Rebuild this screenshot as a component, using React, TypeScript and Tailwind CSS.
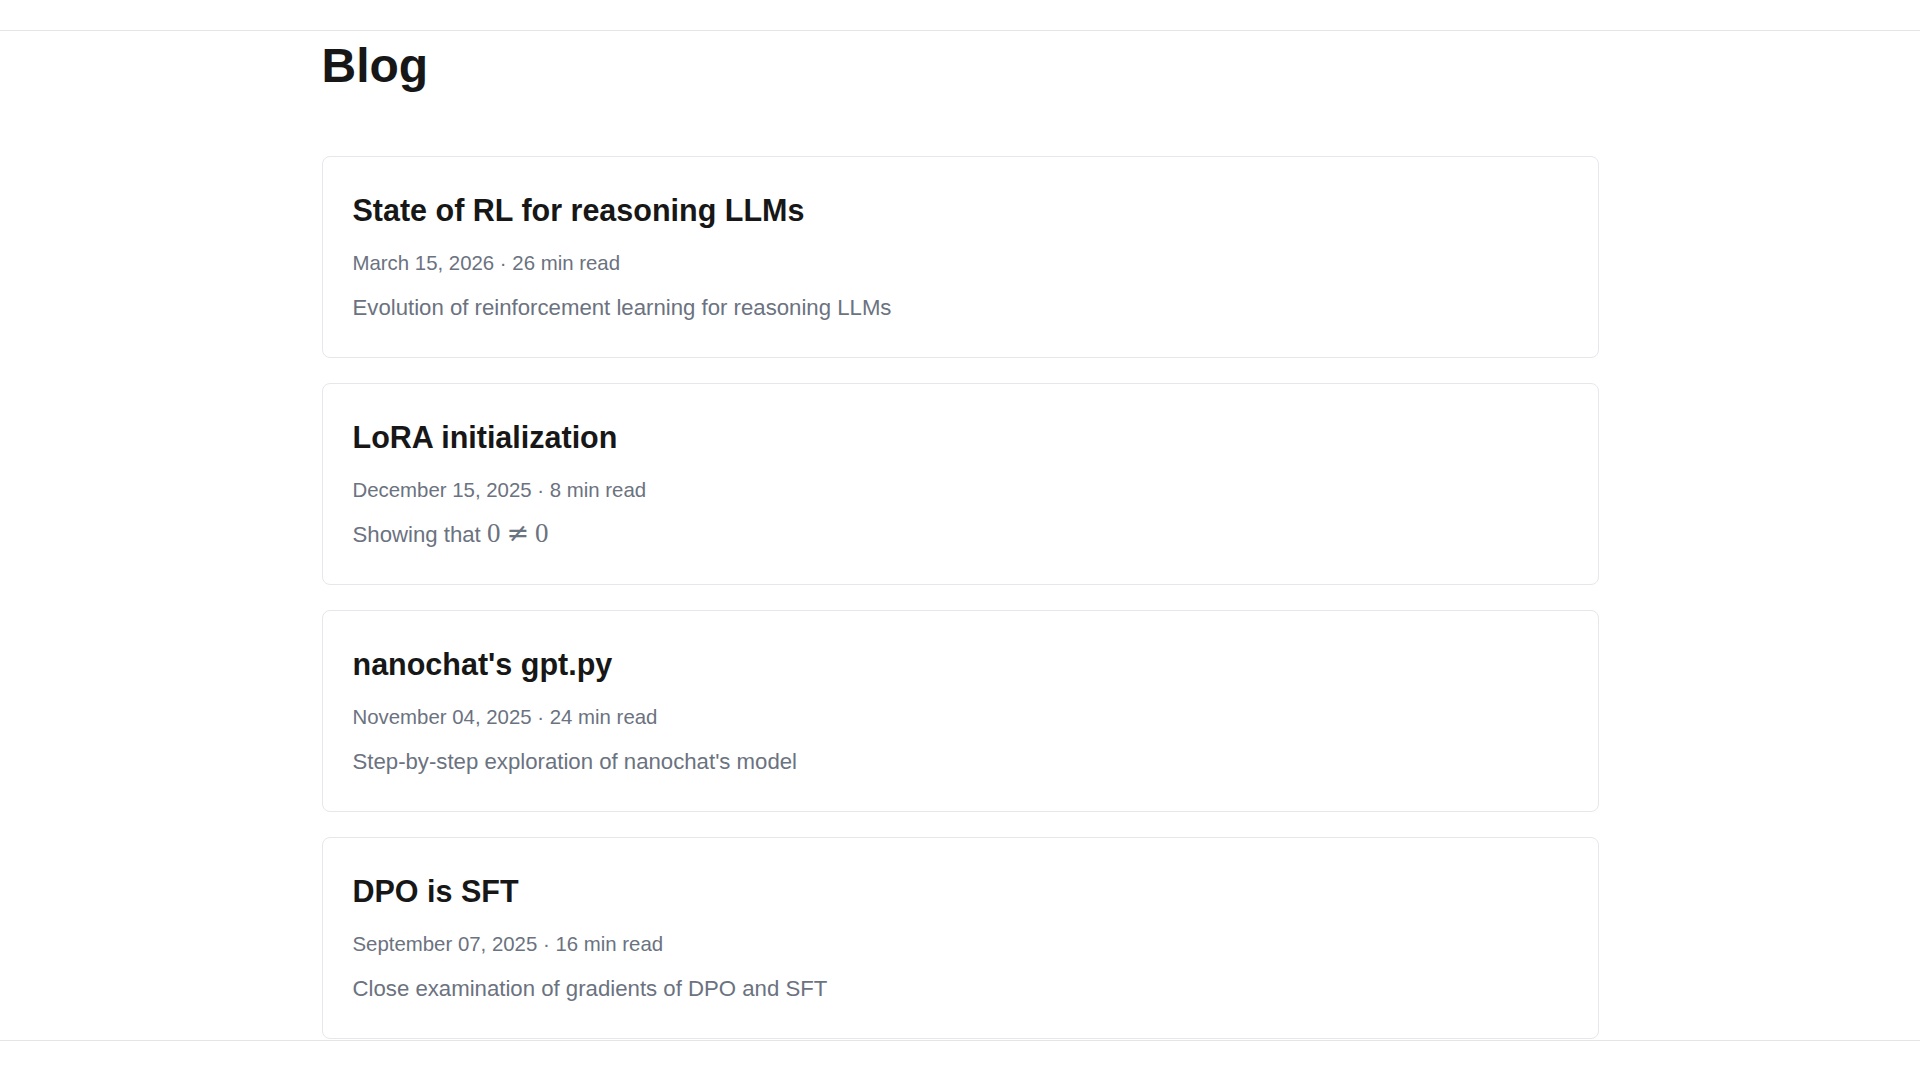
import React from 'react';

type Post = {
  title: string;
  date: string;
  readTime: string;
  summary: React.ReactNode;
};

const posts: Post[] = [
  {
    title: 'State of RL for reasoning LLMs',
    date: 'March 15, 2026',
    readTime: '26 min read',
    summary: 'Evolution of reinforcement learning for reasoning LLMs',
  },
  {
    title: 'LoRA initialization',
    date: 'December 15, 2025',
    readTime: '8 min read',
    summary: (
      <>
        Showing that{' '}
        <span className="font-['Liberation_Serif',serif] text-[27px] leading-none">0</span>
        <span className="font-['DejaVu_Serif',serif] text-[27px] leading-none mx-[6px]">≠</span>
        <span className="font-['Liberation_Serif',serif] text-[27px] leading-none">0</span>
      </>
    ),
  },
  {
    title: "nanochat's gpt.py",
    date: 'November 04, 2025',
    readTime: '24 min read',
    summary: "Step-by-step exploration of nanochat's model",
  },
  {
    title: 'DPO is SFT',
    date: 'September 07, 2025',
    readTime: '16 min read',
    summary: 'Close examination of gradients of DPO and SFT',
  },
];

function PostCard({ post }: { post: Post }) {
  return (
    <a
      href="#"
      className="block h-[202px] bg-white border border-[#e5e7eb] rounded-lg px-[30px] pt-[30px] pb-[33px] hover:border-gray-300 transition-colors"
    >
      <h2 className="text-[30.5px] leading-[46px] font-bold text-[#171717]">{post.title}</h2>
      <p className="mt-[15px] text-[20.4px] leading-[30px] text-[#6b7280]">
        {post.date} · {post.readTime}
      </p>
      <p className="mt-[13px] text-[22.2px] leading-[33px] text-[#6b7280] whitespace-nowrap">{post.summary}</p>
    </a>
  );
}

export default function App() {
  return (
    <div className="h-screen flex flex-col bg-white font-['Liberation_Sans',Arial,sans-serif] overflow-hidden">
      {/* Header */}
      <header className="h-[31px] shrink-0 border-b border-[#e5e5e5] bg-white" />

      {/* Posts */}
      <main className="flex-1 overflow-hidden">
        <div className="max-w-[1277px] mx-auto">
          <h1 className="mt-[11px] text-[48px] leading-[48px] font-bold text-[#171717]">Blog</h1>
          <div className="mt-[66px] flex flex-col gap-[25px]">
            {posts.map(post => (
              <PostCard key={post.title} post={post} />
            ))}
          </div>
        </div>
      </main>

      {/* Footer */}
      <footer className="h-[40px] shrink-0 border-t border-[#e5e5e5] bg-white" />
    </div>
  );
}
